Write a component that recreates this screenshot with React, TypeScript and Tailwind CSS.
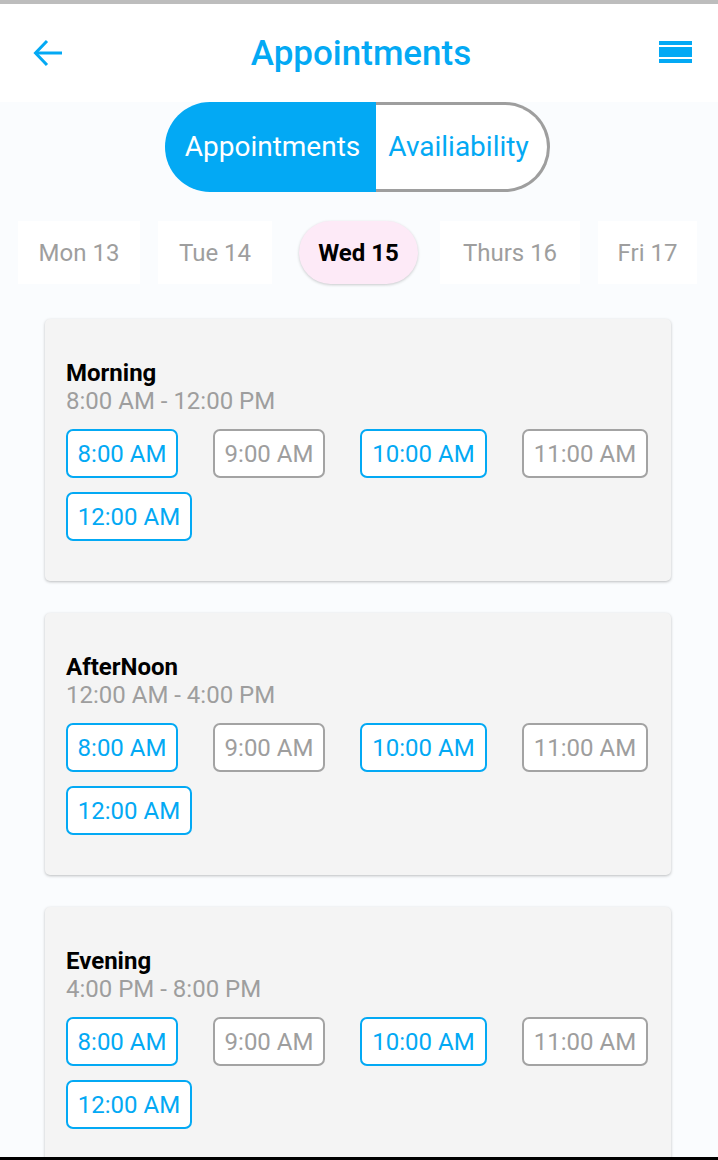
import React from "react";

const slots = [
  { t: "8:00 AM", on: true, w: "w-[112px]" },
  { t: "9:00 AM", on: false, w: "w-[112px]" },
  { t: "10:00 AM", on: true, w: "w-[127px]" },
  { t: "11:00 AM", on: false, w: "w-[126px]" },
  { t: "12:00 AM", on: true, w: "w-[126px]" },
];

function Card({ title, range }: { title: string; range: string }) {
  return (
    <div className="ml-[45px] mr-[47px] h-[262px] shrink-0 rounded-[5px] bg-[#f4f4f4] pl-[21px] pr-[18px] pt-[40px] shadow-[0_1px_3px_rgba(0,0,0,0.25)]">
      <div className="text-[24px] font-bold leading-[28px] text-black">{title}</div>
      <div className="text-[24px] leading-[28px] text-[#9e9e9e]">{range}</div>
      <div className="mt-[14px] flex flex-wrap gap-x-[35px] gap-y-[14px]">
        {slots.map((s) => (
          <div
            key={s.t}
            className={`flex h-[49px] items-center justify-center rounded-[7px] border-2 bg-white text-[24px] ${s.w} ${
              s.on ? "border-[#03a9f4] text-[#03a9f4]" : "border-[#a3a3a3] text-[#9e9e9e]"
            }`}
          >
            {s.t}
          </div>
        ))}
      </div>
    </div>
  );
}

export default function App() {
  return (
    <div
      className="relative flex h-[1160px] w-[718px] flex-col overflow-hidden bg-[#fafcfe]"
      style={{ fontFamily: "Roboto, 'Noto Sans', sans-serif" }}
    >
      <div className="h-[4px] w-full shrink-0 bg-[#bdbdbd]" />
      <div className="flex h-[98px] shrink-0 items-center justify-between bg-white px-[33px]">
        <svg width="30" height="28" viewBox="0 0 30 28" fill="none" stroke="#03a9f4" strokeWidth="3">
          <path d="M29 14H3" />
          <path d="M14 2L2.5 14L14 26" />
        </svg>
        <div className="text-[35px] font-medium leading-none text-[#03a9f4]">Appointments</div>
        <svg width="33" height="24" viewBox="0 0 33 24" fill="#03a9f4" className="mr-[-7px]">
          <rect x="0" y="0" width="33" height="4" />
          <rect x="0" y="6" width="33" height="10" />
          <rect x="0" y="18" width="33" height="4" />
        </svg>
      </div>

      <div className="flex shrink-0 pl-[165px]">
        <div className="flex h-[90px] w-[211px] items-center justify-center rounded-l-full bg-[#03a9f4] pl-[4px] text-[28px] text-white">
          Appointments
        </div>
        <div className="flex h-[90px] w-[174px] items-center justify-center rounded-r-full border-[3px] border-l-0 border-[#9e9e9e] bg-white pr-[6px] text-[28px] text-[#03a9f4]">
          Availiability
        </div>
      </div>

      <div className="mt-[29px] flex h-[63px] shrink-0 items-stretch pl-[18px] text-[24px] text-[#9e9e9e]">
        <div className="flex w-[122px] items-center justify-center bg-white">Mon 13</div>
        <div className="ml-[18px] flex w-[114px] items-center justify-center bg-white">Tue 14</div>
        <div className="ml-[27px] flex w-[119px] items-center justify-center rounded-full bg-[#fdeaf7] font-bold text-black shadow-[0_1px_3px_rgba(0,0,0,0.2)]">
          Wed 15
        </div>
        <div className="ml-[22px] flex w-[140px] items-center justify-center bg-white">Thurs 16</div>
        <div className="ml-[18px] flex w-[99px] items-center justify-center bg-white">Fri 17</div>
      </div>

      <div className="mt-[35px] flex flex-col gap-[32px]">
        <Card title="Morning" range="8:00 AM - 12:00 PM" />
        <Card title="AfterNoon" range="12:00 AM - 4:00 PM" />
        <Card title="Evening" range="4:00 PM - 8:00 PM" />
      </div>

      <div className="absolute bottom-0 left-0 h-[3px] w-full bg-black" />
    </div>
  );
}
